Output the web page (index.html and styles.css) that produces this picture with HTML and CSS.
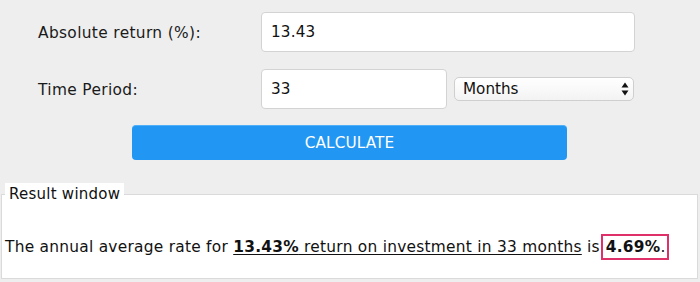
FILE: index.html
```html
<!DOCTYPE html>
<html lang="en">
<head>
<meta charset="utf-8">
<title>Annualized Return Calculator</title>
<link rel="stylesheet" href="styles.css">
</head>
<body>
<div class="calc">
  <form class="form">
    <label class="label" for="ret">Absolute return (%):</label>
    <input class="field field-wide" id="ret" type="text" value="13.43">
    <label class="label" for="per">Time Period:</label>
    <div class="period">
      <input class="field field-short" id="per" type="text" value="33">
      <div class="select-wrap">
        <select class="select">
          <option>Months</option>
          <option>Years</option>
        </select>
        <svg class="select-arrows" width="8" height="14" viewBox="0 0 8 14">
          <path d="M4 0.5 L7.5 5.5 L0.5 5.5 Z" fill="#111"/>
          <path d="M4 13.5 L7.5 8.5 L0.5 8.5 Z" fill="#111"/>
        </svg>
      </div>
    </div>
  </form>
  <div class="actions">
    <button class="btn" type="button">CALCULATE</button>
  </div>
  <fieldset class="result">
    <legend class="result-title">Result window</legend>
    <p class="result-text">The annual average rate for <span class="ul"><b>13.43%</b> return on investment in 33 months</span> is<span class="hl"><b>4.69%</b>.</span></p>
  </fieldset>
</div>
</body>
</html>
```

FILE: styles.css
```css
* { box-sizing: border-box; }
html, body { margin: 0; padding: 0; }
body {
  background: #eeeeee;
  font-family: "DejaVu Sans", Verdana, sans-serif;
  color: #1a1a1a;
  width: 700px;
  height: 282px;
  overflow: hidden;
}
.calc { padding-top: 12px; }
.form {
  display: grid;
  grid-template-columns: 223px 374px;
  row-gap: 17px;
  align-items: center;
  padding-left: 38px;
}
.label {
  font-size: 15.4px;
  letter-spacing: 0.35px;
  color: #1a1a1a;
  padding-top: 1px;
}
.field {
  height: 40px;
  border: 1px solid #d3d3d3;
  border-radius: 4px;
  background: #fff;
  font-family: "DejaVu Sans", Verdana, sans-serif;
  font-size: 15.2px;
  letter-spacing: 0.2px;
  color: #111;
  padding: 0 9px;
  margin: 0;
  outline: none;
}
.field-wide { width: 374px; }
.period {
  display: flex;
  align-items: center;
  gap: 7px;
}
.field-short { width: 186px; }
.select-wrap { position: relative; width: 180px; height: 24px; }
.select {
  appearance: none;
  -webkit-appearance: none;
  width: 180px;
  height: 24px;
  margin: 0;
  border: 1px solid #cfcfcf;
  border-radius: 5px;
  background: linear-gradient(#ffffff, #f3f3f3);
  font-family: "DejaVu Sans", Verdana, sans-serif;
  font-size: 15.2px;
  color: #111;
  padding: 0 8px;
  outline: none;
}
.select-arrows {
  position: absolute;
  right: 5px;
  top: 5px;
  pointer-events: none;
}
.actions {
  padding: 16px 0 0 132px;
}
.btn {
  width: 435px;
  height: 35px;
  background: #2196f3;
  border: none;
  border-top: 1px solid #4fb0f7;
  border-radius: 4px;
  color: #fff;
  font-family: "DejaVu Sans", Verdana, sans-serif;
  font-size: 15.3px;
  letter-spacing: 0.1px;
  padding: 0;
  margin: 0;
}
.result {
  margin: 23px 2px 0 1px;
  padding: 0 3px;
  border: 1px solid #dadada;
  background: #fff;
  height: 96px;
}
.result-title {
  padding: 2px 4px;
  background: #fff;
  font-size: 15px;
  line-height: 18px;
  letter-spacing: 0.25px;
  color: #111;
}
.result-text {
  margin: 32px 0 0;
  font-size: 15.4px;
  line-height: 20px;
  letter-spacing: 0.26px;
  color: #111;
}
.ul { text-decoration: underline; text-underline-offset: 2px; }
.hl {
  border: 2px solid #e0306a;
  margin-left: 1px;
  padding: 2px 1px 2px 3px;
}
```
